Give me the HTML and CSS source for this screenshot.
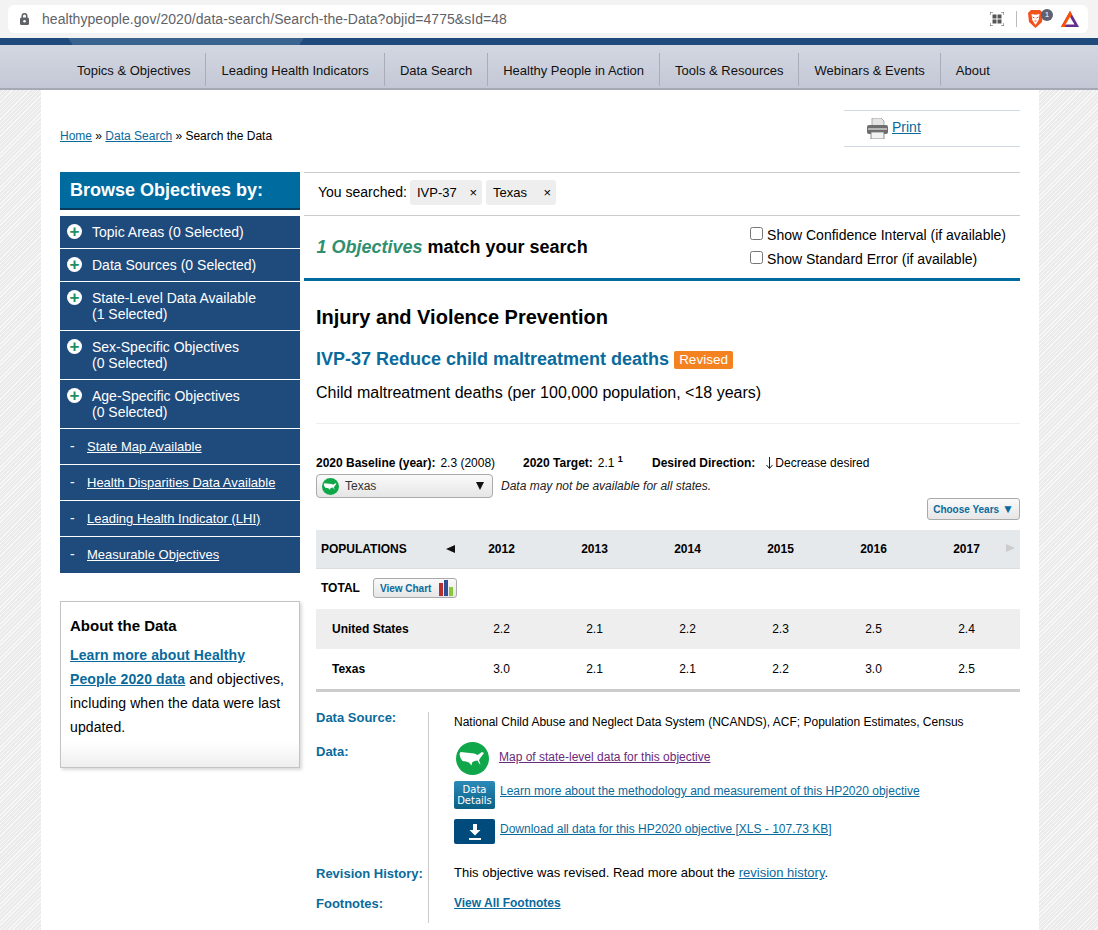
FILE: index.html
```html
<!DOCTYPE html>
<html lang="en">
<head>
    <meta charset="UTF-8">
    <meta name="viewport" content="width=device-width, initial-scale=1.0">
    <title>Search the Data</title>
    <link rel="stylesheet" href="styles.css">
</head>
<body>
    <div class="browser-bar">
        <div class="address">
            <svg class="lock" width="9" height="12" viewBox="0 0 12 16"><path d="M3 7V4a3 3 0 0 1 6 0v3" fill="none" stroke="#5f6368" stroke-width="2"/><rect x="0" y="6" width="12" height="10" rx="2" fill="#5f6368"/><circle cx="6" cy="11" r="1.700" fill="#fff"/></svg>
            <span class="url">healthypeople.gov/2020/data-search/Search-the-Data?objid=4775&amp;sId=48</span>
            <svg class="qr" width="14" height="14" viewBox="0 0 14 14"><path d="M0 3V0h3M11 0h3v3M14 11v3h-3M3 14H0v-3" fill="none" stroke="#555" stroke-width="1"/><rect x="2.500" y="2.500" width="4" height="4" fill="#555"/><rect x="7.500" y="2.500" width="4" height="4" fill="#555"/><rect x="2.500" y="7.500" width="4" height="4" fill="#555"/><rect x="7.500" y="7.500" width="4" height="4" fill="#555"/></svg>
            <span class="bar-divider"></span>
            <span class="brave">
                <svg width="15" height="18" viewBox="0 0 15 18"><path d="M3 0h9l3 3-1 9-6.500 6L1 12 0 3z" fill="#f1511b"/><path d="M3.500 4l4 .8 4-.8-.8 6-3.200 5-3.200-5z" fill="#fff"/><path d="M4.500 7l2 1M10.500 7l-2 1M6.500 11h2" stroke="#f1511b" stroke-width="1"/></svg>
                <span class="badge">1</span>
            </span>
            <svg class="bat" width="18" height="16" viewBox="0 0 18 16"><path d="M9 0l9 16H0z" fill="#662d91"/><path d="M0 16L9 0l2 3.500L4 16z" fill="#ff5000"/><path d="M9 6l4.500 7.500h-9z" fill="#fff"/></svg>
        </div>
    </div>
    <div class="top-strip"><div class="strip-shine"></div></div>
    <nav class="main-nav">
        <a>Topics &amp; Objectives</a>
        <a>Leading Health Indicators</a>
        <a>Data Search</a>
        <a>Healthy People in Action</a>
        <a>Tools &amp; Resources</a>
        <a>Webinars &amp; Events</a>
        <a>About</a>
    </nav>

    <div class="page">
        <div class="top-row">
            <div class="breadcrumb"><a href="#">Home</a> » <a href="#">Data Search</a> » Search the Data</div>
            <div class="print-box">
                <svg width="21" height="21" viewBox="0 0 21 21"><path d="M5 0h9l3 3v6H5z" fill="#e4e4e4" stroke="#999" stroke-width=".8"/><rect x="0" y="7" width="21" height="9" rx="2" fill="#6d6d6d"/><rect x="1" y="10" width="19" height="2" fill="#b5b5b5"/><rect x="4" y="14" width="13" height="7" fill="#f2f2f2" stroke="#777" stroke-width=".8"/></svg>
                <a href="#">Print</a>
            </div>
        </div>

        <div class="columns">
            <aside class="sidebar">
                <h2 class="browse-title">Browse Objectives by:</h2>
                <ul class="filter-list">
                    <li class="filter"><span class="plus">+</span><span>Topic Areas (0 Selected)</span></li>
                    <li class="filter"><span class="plus">+</span><span>Data Sources (0 Selected)</span></li>
                    <li class="filter"><span class="plus">+</span><span>State-Level Data Available<br>(1 Selected)</span></li>
                    <li class="filter"><span class="plus">+</span><span>Sex-Specific Objectives<br>(0 Selected)</span></li>
                    <li class="filter"><span class="plus">+</span><span>Age-Specific Objectives<br>(0 Selected)</span></li>
                    <li class="toggle"><span class="dash">-</span><a href="#">State Map Available</a></li>
                    <li class="toggle"><span class="dash">-</span><a href="#">Health Disparities Data Available</a></li>
                    <li class="toggle"><span class="dash">-</span><a href="#">Leading Health Indicator (LHI)</a></li>
                    <li class="toggle"><span class="dash">-</span><a href="#">Measurable Objectives</a></li>
                </ul>
                <div class="about-box">
                    <h3>About the Data</h3>
                    <p><a href="#">Learn more about Healthy</a> <a href="#">People 2020 data</a> and objectives, including when the data were last updated.</p>
                </div>
            </aside>

            <main class="content">
                <div class="searched">
                    <span class="searched-label">You searched:</span>
                    <span class="chip chip-ivp">IVP-37 <b>×</b></span>
                    <span class="chip chip-state">Texas <b>×</b></span>
                </div>
                <div class="match-row">
                    <div class="match-text"><em>1 Objectives</em> match your search</div>
                    <div class="checks">
                        <label><input type="checkbox"> Show Confidence Interval (if available)</label>
                        <label><input type="checkbox"> Show Standard Error (if available)</label>
                    </div>
                </div>

                <div class="objective">
                    <h2 class="topic">Injury and Violence Prevention</h2>
                    <h3 class="obj-title"><a>IVP-37 Reduce child maltreatment deaths</a> <span class="revised">Revised</span></h3>
                    <p class="obj-desc">Child maltreatment deaths (per 100,000 population, &lt;18 years)</p>

                    <div class="facts">
                        <span class="fact-base"><b>2020 Baseline (year):</b><span class="fact-val">2.3 (2008)</span></span>
                        <span class="fact-target"><b>2020 Target:</b><span class="fact-val">2.1 <sup>1</sup></span></span>
                        <span class="fact-dir"><b>Desired Direction:</b><svg class="down" width="7" height="12" viewBox="0 0 7 12"><path d="M3.500 0v11M.5 8l3 3.500 3-3.500" fill="none" stroke="#222" stroke-width="1"/></svg>Decrease desired</span>
                    </div>
                    <div class="state-row">
                        <div class="state-select">
                            <svg width="17" height="17" viewBox="0 0 33 33"><circle cx="16.500" cy="16.500" r="16.500" fill="#0fa74a"/><path d="M4.500 10l14 1.500 3 1.500 4.500-3 2 1-3 4-2 3 1.500 4.500-1-.5-2-3.500-3 .5-2.500 1.500-.5 3-2.500-3-3-1-3.500-.5-2-3-1-4z" fill="#fff"/></svg>
                            <span class="state-name">Texas</span>
                            <span class="state-arrow"></span>
                        </div>
                        <em class="state-note">Data may not be available for all states.</em>
                    </div>
                    <div class="years-row"><button class="choose-years">Choose Years <span>▼</span></button></div>

                    <div class="data-table">
                        <div class="row head">
                            <div class="pop-cell">POPULATIONS <span class="arrow-left"></span></div>
                            <div>2012</div><div>2013</div><div>2014</div><div>2015</div><div>2016</div><div>2017</div>
                            <span class="arrow-right"></span>
                        </div>
                        <div class="row total">
                            <div class="total-cell"><b>TOTAL</b>
                                <button class="view-chart">View Chart
                                    <svg width="14" height="16" viewBox="0 0 14 16"><rect x="0" y="3" width="4" height="13" fill="#b5302e"/><rect x="5" y="0" width="4" height="16" fill="#2e4f93"/><rect x="10" y="7" width="4" height="9" fill="#8cc63f"/></svg>
                                </button>
                            </div>
                        </div>
                        <div class="row shaded">
                            <div class="name">United States</div>
                            <div>2.2</div><div>2.1</div><div>2.2</div><div>2.3</div><div>2.5</div><div>2.4</div>
                        </div>
                        <div class="row last">
                            <div class="name">Texas</div>
                            <div>3.0</div><div>2.1</div><div>2.1</div><div>2.2</div><div>3.0</div><div>2.5</div>
                        </div>
                    </div>

                    <div class="details">
                        <div class="labels">
                            <div class="lab-source">Data Source:</div>
                            <div class="lab-data">Data:</div>
                            <div class="lab-rev">Revision History:</div>
                            <div class="lab-foot">Footnotes:</div>
                        </div>
                        <div class="values">
                            <div class="val-source">National Child Abuse and Neglect Data System (NCANDS), ACF; Population Estimates, Census</div>
                            <div class="link-row map-link">
                                <svg width="33" height="33" viewBox="0 0 33 33"><circle cx="16.500" cy="16.500" r="16.500" fill="#0fa74a"/><path d="M4.500 10l14 1.500 3 1.500 4.500-3 2 1-3 4-2 3 1.500 4.500-1-.5-2-3.500-3 .5-2.500 1.500-.5 3-2.500-3-3-1-3.500-.5-2-3-1-4z" fill="#fff"/></svg>
                                <a href="#" class="visited">Map of state-level data for this objective</a>
                            </div>
                            <div class="link-row details-link">
                                <span class="details-btn">Data<br>Details</span>
                                <a href="#">Learn more about the methodology and measurement of this HP2020 objective</a>
                            </div>
                            <div class="link-row download-link">
                                <span class="download-btn"><svg width="14" height="16" viewBox="0 0 14 16"><path d="M5 0h4v6h3.500L7 11.500 1.500 6H5z" fill="#fff"/><rect x="1" y="14" width="12" height="2" fill="#fff"/></svg></span>
                                <a href="#">Download all data for this HP2020 objective [XLS - 107.73 KB]</a>
                            </div>
                            <div class="val-rev">This objective was revised. Read more about the <a href="#">revision history</a>.</div>
                            <div class="val-foot"><a href="#">View All Footnotes</a></div>
                        </div>
                    </div>
                </div>
            </main>
        </div>
    </div>
</body>
</html>
```

FILE: styles.css
```css
* {
    box-sizing: border-box;
}
html, body {
    height: 930px;
    overflow: hidden;
}
body {
    margin: 0;
    font-family: "Liberation Sans", Arial, sans-serif;
    color: #000;
    background-color: #f0f0f0;
    background-image: repeating-linear-gradient(135deg, #f8f8f8 0, #f8f8f8 1px, #ebebeb 1px, #ebebeb 3px);
}
a {
    color: #0a6a9c;
}

/* browser chrome */
.browser-bar {
    height: 38px;
    padding: 5px 10px 0 8px;
    background-color: #f3f3f3;
}
.address {
    display: flex;
    align-items: center;
    height: 28px;
    padding: 0 9px 0 12px;
    background-color: white;
    border-radius: 6px;
}
.url {
    margin-left: 13px;
    flex: 1;
    font-size: 14px;
    letter-spacing: 0.05px;
    color: #5f6368;
}
.qr {
    margin-right: 12px;
}
.bar-divider {
    width: 1px;
    height: 16px;
    margin-right: 11px;
    background-color: #bbb;
}
.brave {
    position: relative;
    display: flex;
    width: 33px;
}
.badge {
    position: absolute;
    left: 13px;
    top: -1px;
    width: 12px;
    height: 12px;
    border-radius: 50%;
    background-color: #5f6072;
    color: white;
    font-size: 8px;
    line-height: 12px;
    text-align: center;
}

/* site header */
.top-strip {
    height: 7px;
    background-color: #1f4a7c;
}
.strip-shine {
    width: 236px;
    height: 7px;
    margin-left: 68px;
    background-color: #3a6390;
    clip-path: polygon(0 0, 100% 0, 98% 100%, 2% 100%);
}
.main-nav {
    display: flex;
    height: 45px;
    padding: 8px 0 0 62px;
    background: linear-gradient(#d2d7e1, #c4c8d6);
    border-bottom: 2px solid #a5a9b5;
}
.main-nav a {
    height: 33px;
    padding: 0 15px;
    border-right: 1px solid #a9adb9;
    font-size: 13px;
    line-height: 35px;
    color: #111;
    white-space: nowrap;
}
.main-nav a:last-child {
    border-right: none;
}

/* page */
.page {
    width: 998px;
    height: 840px;
    margin-left: 41px;
    padding: 20px 19px 0;
    background-color: white;
}
.top-row {
    display: flex;
    justify-content: space-between;
    height: 62px;
}
.breadcrumb {
    padding-top: 19px;
    font-size: 12px;
    line-height: 14px;
}
.print-box {
    display: flex;
    gap: 4px;
    width: 176px;
    height: 37px;
    padding: 7px 0 0 23px;
    border-top: 1px solid #cfd8e2;
    border-bottom: 1px solid #cfd8e2;
    font-size: 14px;
    line-height: 19px;
}
.columns {
    display: flex;
    gap: 4px;
}

/* sidebar */
.sidebar {
    width: 240px;
    flex-shrink: 0;
}
.browse-title {
    height: 38px;
    margin: 0 0 6px;
    padding-left: 10px;
    background-color: #006b9f;
    border-bottom: 2px solid #0a3a5c;
    color: white;
    font-size: 18px;
    line-height: 37px;
}
.filter-list {
    margin: 0;
    padding: 0;
    list-style: none;
}
.filter-list li {
    display: flex;
    margin-bottom: 1px;
    background-color: #1f4a7c;
    color: white;
    font-size: 14px;
}
.filter {
    gap: 10px;
    padding: 8px 7px;
    line-height: 16px;
}
.plus {
    display: block;
    width: 15px;
    height: 15px;
    flex-shrink: 0;
    border-radius: 50%;
    background-color: white;
    color: #1e8f63;
    font-size: 17px;
    font-weight: bold;
    line-height: 15px;
    text-align: center;
}
.toggle {
    height: 35px;
    padding-left: 10px;
    line-height: 35px;
}
.dash {
    width: 17px;
}
.toggle a {
    color: white;
    font-size: 13px;
}
.filter-list li:last-child {
    height: 36px;
    margin-bottom: 0;
}
.about-box {
    height: 167px;
    margin-top: 28px;
    padding: 15px 9px 0;
    background: linear-gradient(white 0, white 140px, #eee 100%);
    border: 1px solid #c4c4c4;
    box-shadow: 2px 2px 3px rgba(0, 0, 0, 0.15);
}
.about-box h3 {
    margin: 0 0 8px;
    font-size: 15px;
    line-height: 18px;
}
.about-box p {
    margin: 0;
    font-size: 14px;
    line-height: 24px;
    letter-spacing: 0.1px;
}
.about-box a {
    font-weight: bold;
}

/* main content */
.content {
    width: 716px;
}
.searched {
    display: flex;
    align-items: center;
    height: 44px;
    padding: 0 0 4px 14px;
    border-top: 1px solid #ccc;
    border-bottom: 1px solid #ccc;
    font-size: 14px;
}
.searched-label {
    margin-right: 3px;
}
.chip {
    display: flex;
    justify-content: space-between;
    align-items: center;
    height: 25px;
    margin-right: 4px;
    padding: 0 5px 0 7px;
    background-color: #eee;
    border-radius: 3px;
    font-size: 13px;
}
.chip-ivp {
    width: 72px;
}
.chip-state {
    width: 70px;
}
.chip b {
    font-weight: normal;
}
.match-row {
    display: flex;
    justify-content: space-between;
    height: 65px;
    padding: 10px 14px 0 12.5px;
    border-bottom: 3px solid #006b9f;
}
.match-text {
    padding-top: 11px;
    font-size: 18px;
    font-weight: bold;
}
.match-text em {
    color: #2f8f6f;
}
.checks {
    display: flex;
    flex-direction: column;
    gap: 6px;
    font-size: 14px;
    line-height: 18px;
}
.checks input {
    width: 13px;
    height: 13px;
    margin: 0 0 0 1px;
}
.objective {
    padding: 25px 0 0 12px;
}
.topic {
    margin: 0;
    font-size: 20px;
    line-height: 23px;
}
.obj-title {
    margin: 19px 0 0;
    font-size: 18px;
    line-height: 22px;
}
.obj-title a {
    color: #0a6a9c;
}
.revised {
    display: inline-block;
    padding: 0 5px;
    background-color: #f58220;
    border-radius: 2px;
    color: white;
    font-size: 13.5px;
    font-weight: normal;
    line-height: 18px;
    vertical-align: 1px;
}
.obj-desc {
    margin: 13px 0 0;
    padding-bottom: 20px;
    border-bottom: 1px solid #eee;
    font-size: 16px;
    line-height: 20px;
}
.facts {
    display: flex;
    margin-top: 31px;
    font-size: 12px;
    line-height: 16px;
}
.fact-base {
    width: 207px;
}
.fact-target {
    width: 129px;
}
.fact-val {
    margin-left: 5px;
}
.facts sup {
    font-size: 9px;
    font-weight: bold;
    line-height: 0;
}
.fact-dir .down {
    margin: 0 2px 0 11px;
    vertical-align: -2px;
}
.state-row {
    display: flex;
    align-items: center;
    gap: 8px;
    margin-top: 3px;
}
.state-select {
    display: flex;
    align-items: center;
    width: 177px;
    height: 24px;
    padding: 0 5px;
    background: linear-gradient(#fafafa, #e6e6e6);
    border: 1px solid #aaa;
    border-radius: 4px;
    font-size: 12px;
}
.state-name {
    flex: 1;
    margin-left: 6px;
    color: #333;
}
.state-arrow {
    width: 0;
    height: 0;
    margin-right: 3px;
    border-left: 4px solid transparent;
    border-right: 4px solid transparent;
    border-top: 8px solid #111;
}
.state-note {
    font-size: 12px;
    color: #222;
}
.years-row {
    display: flex;
    justify-content: flex-end;
    height: 22px;
}
.choose-years {
    width: 93px;
    height: 22px;
    padding: 0;
    background: linear-gradient(#fafafa, #e6e6e6);
    border: 1px solid #aaa;
    border-radius: 3px;
    color: #0a6a9c;
    font-family: "Liberation Sans", Arial, sans-serif;
    font-size: 10px;
    font-weight: bold;
}
.choose-years span {
    font-size: 12px;
}
.data-table {
    position: relative;
    margin-top: 10px;
}
.row {
    display: grid;
    grid-template-columns: 139px repeat(6, 93px);
    align-items: center;
    height: 40px;
    font-size: 12px;
    text-align: center;
}
.head {
    position: relative;
    height: 39px;
    padding-bottom: 1px;
    background-color: #e6e9ec;
    border-bottom: 1px solid #ddd;
    font-weight: bold;
}
.pop-cell {
    position: relative;
    padding-left: 5px;
    text-align: left;
}
.arrow-left {
    position: absolute;
    left: 130px;
    top: 3px;
    border-top: 4px solid transparent;
    border-bottom: 4px solid transparent;
    border-right: 9px solid #111;
}
.arrow-right {
    position: absolute;
    right: 5px;
    top: 14px;
    border-top: 4px solid transparent;
    border-bottom: 4px solid transparent;
    border-left: 9px solid #ccc;
}
.total {
    padding-bottom: 2px;
}
.total-cell {
    grid-column: 1 / -1;
    display: flex;
    align-items: center;
    gap: 13px;
    padding-left: 5px;
    text-align: left;
}
.view-chart {
    display: flex;
    align-items: center;
    justify-content: space-between;
    width: 84px;
    height: 20px;
    padding: 0 3px 0 6px;
    background: linear-gradient(#fafafa, #e6e6e6);
    border: 1px solid #aaa;
    border-radius: 3px;
    color: #0a6a9c;
    font-family: "Liberation Sans", Arial, sans-serif;
    font-size: 10px;
    font-weight: bold;
}
.shaded {
    background-color: #eee;
}
.name {
    padding-left: 16px;
    font-weight: bold;
    text-align: left;
}
.last {
    height: 43px;
    border-bottom: 3px solid #ccc;
}

/* details below the table */
.details {
    display: flex;
    margin-top: 20px;
}
.labels {
    width: 113px;
    height: 211px;
    border-right: 1px solid #ccc;
    color: #0a6a9c;
    font-size: 13px;
    font-weight: bold;
    line-height: 16px;
}
.lab-source {
    margin-top: -2px;
}
.lab-data {
    margin-top: 18px;
}
.lab-rev {
    margin-top: 106px;
}
.lab-foot {
    margin-top: 14px;
}
.values {
    padding-left: 25px;
    font-size: 12px;
}
.val-source {
    margin-top: 2px;
    line-height: 16px;
}
.link-row {
    display: flex;
    align-items: flex-start;
    gap: 5px;
}
.map-link {
    gap: 10px;
    height: 33px;
    margin-top: 12px;
    margin-left: 2px;
    line-height: 30px;
}
.visited {
    color: #6a2a7c;
}
.details-link {
    margin-top: 6px;
    height: 28px;
    line-height: 21px;
}
.details-btn {
    width: 41px;
    height: 28px;
    padding-top: 3px;
    background: linear-gradient(#2a8bb8, #0a5f85);
    border-radius: 2px;
    color: white;
    font-family: "DejaVu Sans", sans-serif;
    font-size: 10px;
    line-height: 11px;
    text-align: center;
}
.download-link {
    margin-top: 10px;
    height: 25px;
    line-height: 20px;
}
.download-btn {
    display: flex;
    align-items: center;
    justify-content: center;
    width: 41px;
    height: 25px;
    background-color: #004a7c;
    border-radius: 2px;
}
.val-rev {
    margin-top: 21px;
    font-size: 13px;
    line-height: 16px;
}
.val-foot {
    margin-top: 14px;
    font-weight: bold;
    line-height: 16px;
}
```
